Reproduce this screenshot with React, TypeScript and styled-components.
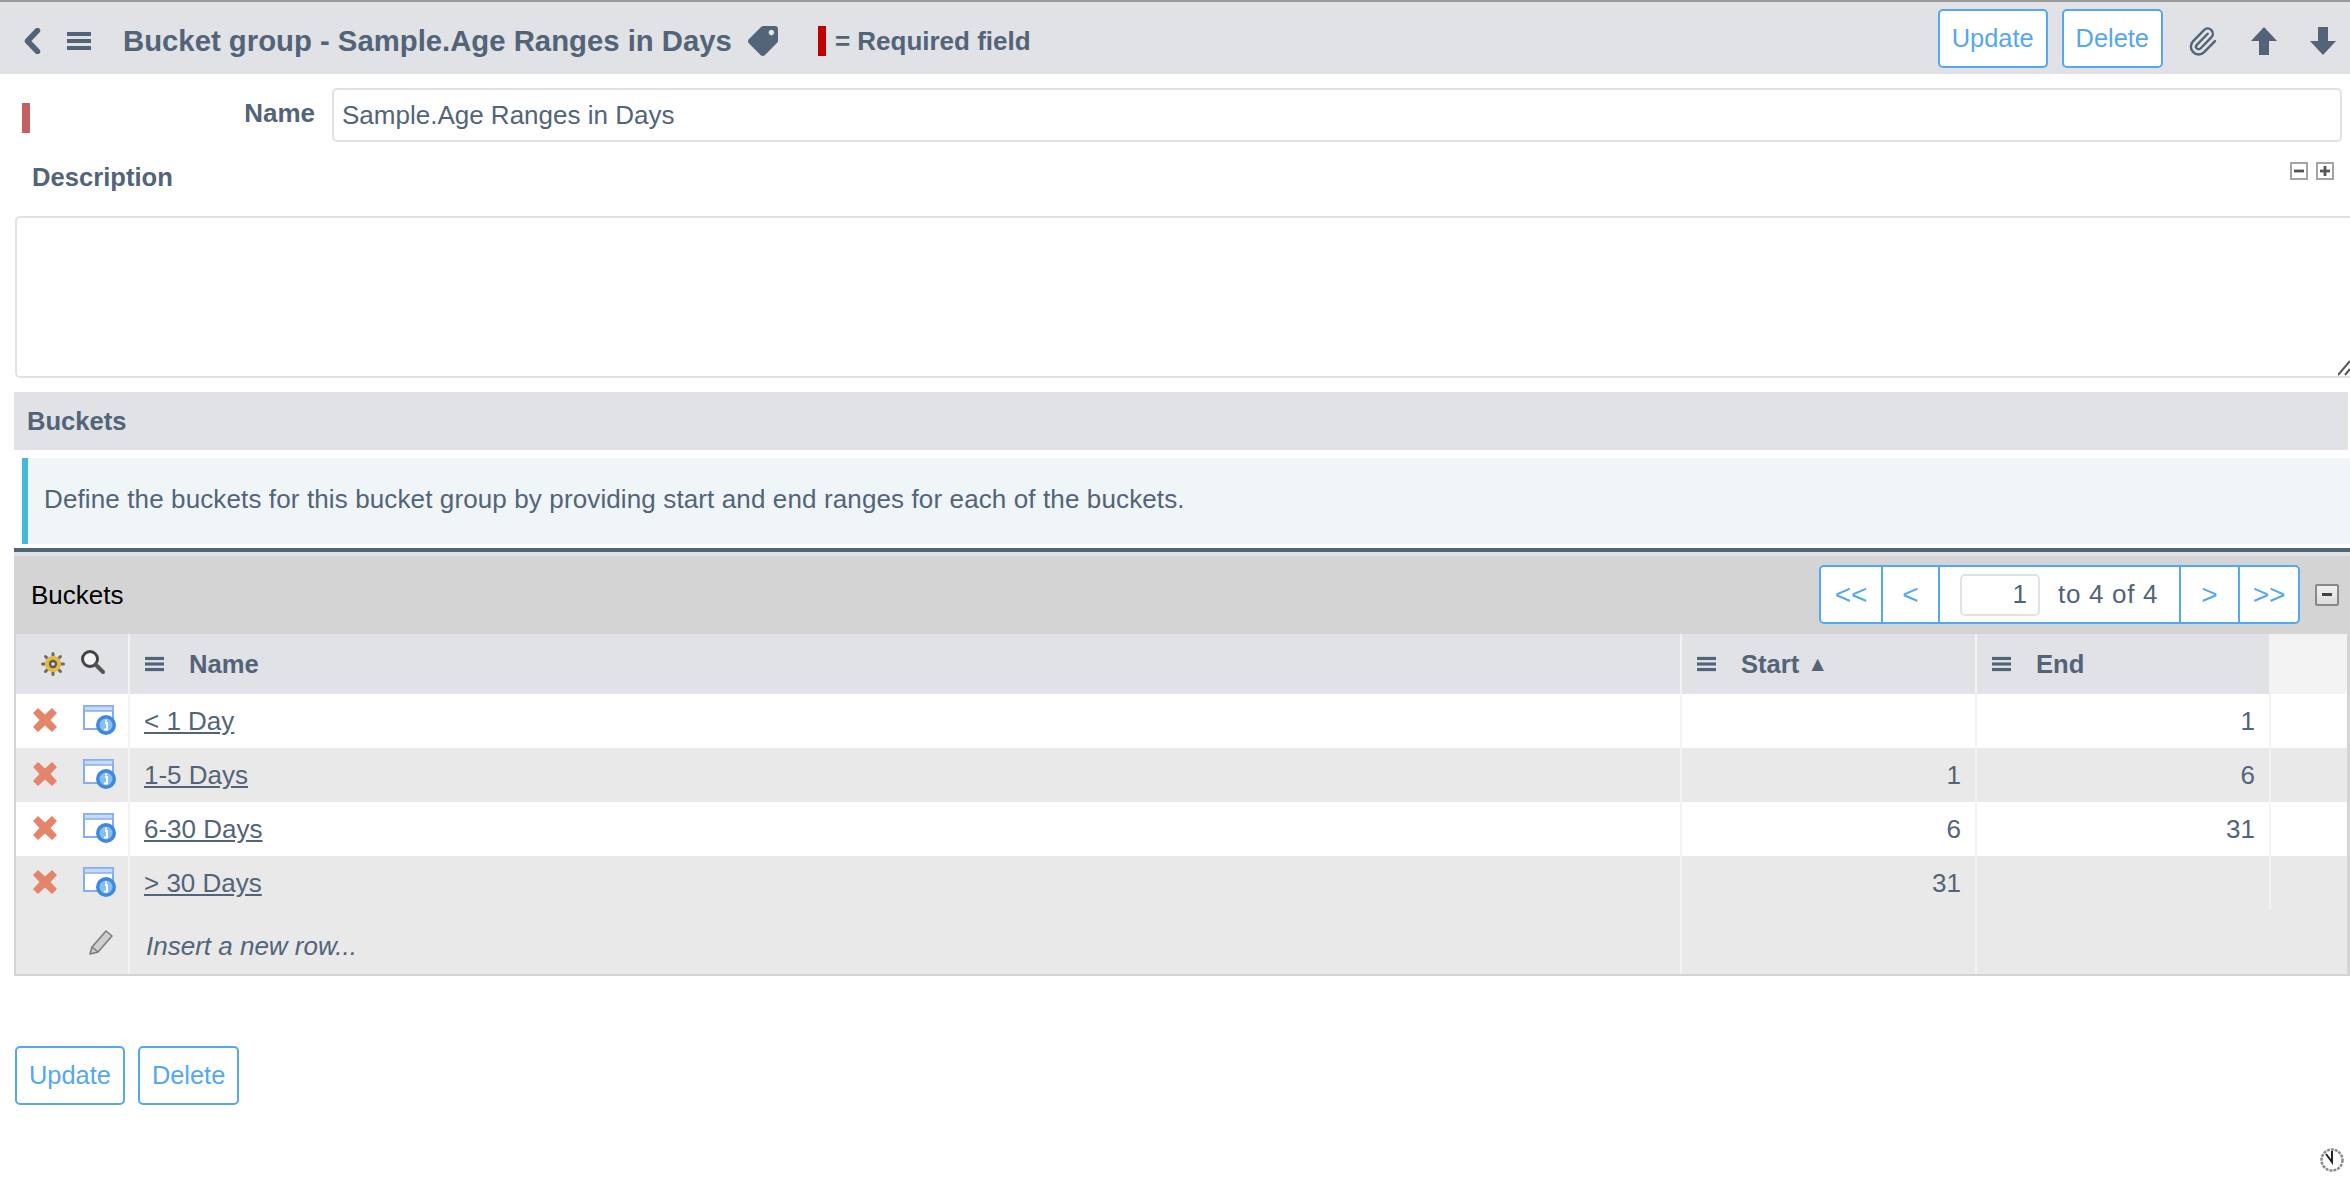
import React from 'react';
import styled, { createGlobalStyle } from 'styled-components';
import { Paperclip } from 'lucide-react';
import { FaTag } from 'react-icons/fa';

const TEXT = '#536478';
const BLUE = '#55a7ee';
const BAR = '#e0e2e6';

const GlobalStyle = createGlobalStyle`
    html, body {
        margin: 0;
        padding: 0;
        background: #fff;
        overflow: hidden;
    }
    body, input, textarea, button, table {
        font-family: "Liberation Sans", Arial, sans-serif;
        font-size: 26px;
        color: ${TEXT};
    }
`;

const Page = styled.div`
    width: 2350px;
    height: 1200px;
    display: flex;
    flex-direction: column;
    overflow: hidden;
`;

const Header = styled.div`
    height: 66px;
    border-top: 2px solid #999;
    background: ${BAR};
    display: flex;
    align-items: center;
    padding: 6px 0 0 23px;
`;

const Title = styled.h1`
    margin: 0 0 0 32px;
    font-size: 29.3px;
    font-weight: bold;
    white-space: nowrap;
`;

const RequiredMark = styled.span`
    width: 8px;
    height: 30px;
    background: #c00000;
    margin-left: 40px;
`;

const RequiredText = styled.span`
    margin-left: 9px;
    font-weight: bold;
`;

const Actions = styled.div`
    margin: -6px 0 0 auto;
    display: flex;
    align-items: center;
    gap: 14px;
    padding-right: 14px;
`;

const ActionButton = styled.button`
    height: 59px;
    padding: 0 12px;
    background: #fff;
    border: 2px solid ${BLUE};
    border-radius: 5px;
    color: ${BLUE};
    font-size: 25.4px;
`;

const ActionIcons = styled.div`
    display: flex;
    align-items: center;
    gap: 33px;
    margin-left: 10px;
`;

const NameRow = styled.div`
    display: flex;
    align-items: center;
    margin-top: 14px;
    height: 54px;
    padding: 0 8px 0 22px;
`;

const RequiredFlag = styled.span`
    width: 8px;
    height: 30px;
    margin-top: 5px;
    background: #c66060;
`;

const NameLabel = styled.label`
    width: 302px;
    padding-right: 17px;
    box-sizing: border-box;
    text-align: right;
    font-weight: bold;
    margin-top: -4px;
`;

const NameInput = styled.input`
    flex: 1;
    height: 100%;
    box-sizing: border-box;
    border: 2px solid ${BAR};
    border-radius: 5px;
    padding: 0 8px;
    outline: none;
`;

const DescriptionRow = styled.div`
    height: 74px;
    display: flex;
    justify-content: space-between;
    padding: 20px 16px 0 32px;
    box-sizing: border-box;
`;

const BoldLabel = styled.span`
    font-size: 25.6px;
    font-weight: bold;
    line-height: 30px;
`;

const ExpandGroup = styled.div`
    display: flex;
    gap: 8px;
`;

const ExpandBox = styled.span<{ $plus?: boolean }>`
    width: 18px;
    height: 18px;
    box-sizing: border-box;
    border: 2px solid #a4a4a4;
    background: #fff;
    position: relative;
    &::before {
        content: '';
        position: absolute;
        left: 2px;
        right: 2px;
        top: 5px;
        height: 4px;
        background: #555;
        transform: scaleY(0.7);
    }
    &::after {
        content: '';
        display: ${(p) => (p.$plus ? 'block' : 'none')};
        position: absolute;
        top: 2px;
        bottom: 2px;
        left: 5px;
        width: 4px;
        background: #555;
        transform: scaleX(0.7);
    }
`;

const AreaWrap = styled.div`
    position: relative;
    height: 162px;
    margin-left: 15px;
`;

const DescriptionArea = styled.textarea`
    display: block;
    width: 2350px;
    height: 162px;
    box-sizing: border-box;
    border: 2px solid ${BAR};
    border-radius: 5px;
    outline: none;
    resize: none;
`;

const Grip = styled.svg`
    position: absolute;
    right: 0;
    bottom: 2px;
`;

const SectionBar = styled.div`
    margin: 14px 2px 0 14px;
    height: 58px;
    background: ${BAR};
    display: flex;
    align-items: center;
    padding-left: 13px;
`;

const InfoBox = styled.div`
    margin: 8px 0 0 22px;
    height: 86px;
    box-sizing: border-box;
    border-left: 6px solid #46b8da;
    background: #f0f5f8;
    display: flex;
    align-items: center;
    padding: 0 0 3px 16px;
    letter-spacing: 0.12px;
`;

const Grid = styled.div`
    margin: 4px 0 0 14px;
    border-top: 4px solid ${TEXT};
`;

const GridTop = styled.div`
    height: 78px;
    border-top: 4px solid ${BAR};
    background: #d4d4d4;
    display: flex;
    align-items: center;
    justify-content: space-between;
    padding: 0 11px 0 17px;
    color: #000;
`;

const PagerWrap = styled.div`
    display: flex;
    align-items: center;
    gap: 16px;
    margin-top: -1px;
`;

const Pager = styled.div`
    display: flex;
    height: 59px;
    box-sizing: border-box;
    border: 2px solid ${BLUE};
    border-radius: 5px;
    background: #fff;
`;

const PagerButton = styled.span<{ $w: number }>`
    width: ${(p) => p.$w}px;
    display: flex;
    align-items: center;
    justify-content: center;
    color: ${BLUE};
    font-size: 28px;
    & + & {
        border-left: 2px solid ${BLUE};
    }
`;

const PagerCenter = styled.div`
    width: 243px;
    display: flex;
    align-items: center;
    border-left: 2px solid ${BLUE};
    border-right: 2px solid ${BLUE};
    box-sizing: border-box;
    padding-left: 20px;
    gap: 18px;
    color: ${TEXT};
    letter-spacing: 0.7px;
`;

const PageInput = styled.input`
    width: 80px;
    height: 42px;
    box-sizing: border-box;
    border: 2px solid ${BAR};
    border-radius: 5px;
    text-align: right;
    padding: 0 11px;
    outline: none;
`;

const CollapseBox = styled.span`
    width: 24px;
    height: 22px;
    box-sizing: border-box;
    border: 2px solid #888;
    border-radius: 2px;
    background: linear-gradient(#f2f2f2, #dcdcdc);
    position: relative;
    margin-left: -1px;
    &::after {
        content: '';
        position: absolute;
        left: 5px;
        right: 5px;
        top: 7px;
        height: 3px;
        background: #444;
    }
`;

const Table = styled.table`
    width: 2336px;
    table-layout: fixed;
    border-collapse: separate;
    border-spacing: 0;
    border-left: 2px solid #d4d4d4;
    border-right: 3px solid #d4d4d4;
    border-bottom: 2px solid #d4d4d4;
    box-sizing: border-box;
`;

const Th = styled.th<{ $empty?: boolean }>`
    height: 60px;
    padding: 0;
    background: ${(p) => (p.$empty ? '#f3f3f3' : BAR)};
    border-right: ${(p) => (p.$empty ? '0' : '2px solid #f3f3f3')};
    text-align: left;
    font-size: 25.6px;
    font-weight: bold;
`;

const HeadCell = styled.div`
    display: flex;
    align-items: center;
    padding-left: 15px;
    gap: 25px;
`;

const HeadIcons = styled.div`
    display: flex;
    align-items: center;
    gap: 15px;
    padding-left: 25px;
`;

const SortMark = styled.span`
    font-size: 21px;
    margin-left: -17px;
`;

const Row = styled.tr<{ $alt?: boolean }>`
    background: ${(p) => (p.$alt ? '#e9e9e9' : '#fff')};
`;

const Td = styled.td<{ $num?: boolean; $last?: boolean }>`
    height: 54px;
    padding: ${(p) => (p.$num ? '0 14px 0 0' : '0 0 0 14px')};
    text-align: ${(p) => (p.$num ? 'right' : 'left')};
    border-right: ${(p) => (p.$last ? '0' : '2px solid #f3f3f3')};
`;

const IconCell = styled.div`
    display: flex;
    align-items: center;
    gap: 25px;
    padding-left: 2px;
`;

const BucketLink = styled.a`
    color: ${TEXT};
    text-decoration: underline;
`;

const InsertCell = styled.td<{ $last?: boolean }>`
    height: 64px;
    box-sizing: border-box;
    padding: 9px 0 0 16px;
    font-style: italic;
    border-right: ${(p) => (p.$last ? '0' : '2px solid #f3f3f3')};
`;

const PencilCell = styled.div`
    display: flex;
    justify-content: flex-end;
    padding: 0 15px 9px 0;
`;

const BottomActions = styled.div`
    display: flex;
    gap: 13px;
    margin: 70px 0 0 15px;
`;

const Clock = styled.div`
    position: absolute;
    left: 2320px;
    top: 1148px;
    line-height: 0;
`;

const Chevron = () => (
    <svg width="18" height="26" viewBox="0 0 18 26" style={{ flex: 'none' }}>
        <path d="M14.5 2.5L4.5 13l10 10.5" fill="none" stroke={TEXT} strokeWidth="5.5" strokeLinecap="round" strokeLinejoin="round" />
    </svg>
);

const Bars = ({ w = 24, h = 20 }: { w?: number; h?: number }) => (
    <svg width={w} height={h} viewBox="0 0 24 20" fill={TEXT} style={{ flex: 'none' }}>
        <rect y="1" width="24" height="4" />
        <rect y="8" width="24" height="4" />
        <rect y="15" width="24" height="4" />
    </svg>
);

const Arrow = ({ down }: { down?: boolean }) => (
    <svg width="26" height="30" viewBox="0 0 26 30" fill={TEXT} style={{ marginTop: 6 }}>
        <path d={down ? 'M8 1h10v14h8L13 29 0 15h8z' : 'M13 1l13 14h-8v14H8V15H0z'} />
    </svg>
);

const Gear = () => (
    <svg width="24" height="24" viewBox="0 0 24 24">
        <g stroke="#6e6a5c" strokeWidth="3" strokeLinecap="round">
            <path d="M12 1.5v21M1.5 12h21M4.5 4.5l15 15M19.5 4.5l-15 15" />
        </g>
        <circle cx="12" cy="12" r="8" fill="#e5bb45" />
        <circle cx="12" cy="12" r="4.2" fill="#5d5a55" />
        <circle cx="12" cy="12" r="1.8" fill="#dfe1e5" />
    </svg>
);

const Search = () => (
    <svg width="26" height="26" viewBox="0 0 26 26" fill="none" style={{ marginTop: -4 }}>
        <circle cx="10" cy="10" r="7.5" stroke="#444" strokeWidth="3" fill="#f4f4f4" />
        <path d="M15.5 15.5L23 23" stroke="#555" strokeWidth="4" strokeLinecap="round" />
    </svg>
);

const Cross = () => (
    <svg width="26" height="26" viewBox="0 0 26 26" style={{ flex: 'none', marginLeft: 14, marginTop: -3 }}>
        <path d="M6 1l7 6.5L20 1l5 5-6.5 7 6.5 7-5 5-7-6.5L6 25l-5-5 6.5-7L1 6z" fill="#e4856b" />
    </svg>
);

const InfoWindow = () => (
    <svg width="33" height="30" viewBox="0 0 33 30" style={{ flex: 'none', marginTop: -3 }}>
        <rect x="1" y="1" width="29" height="23" fill="#fff" stroke="#86aeee" strokeWidth="2" />
        <rect x="1" y="1" width="29" height="5" fill="#c6d9f5" stroke="#86aeee" strokeWidth="1.5" />
        <circle cx="23" cy="20" r="10" fill="#3f88e0" />
        <circle cx="23" cy="20" r="6.5" fill="#86bff0" />
        <path d="M23 14.5v2M22 18h2v6.5h-3" fill="none" stroke="#fff" strokeWidth="2" />
    </svg>
);

const Pencil = () => (
    <svg width="24" height="26" viewBox="0 0 24 26">
        <path d="M1 25l2-7L17 2l6 5L9 23z" fill="#cfcfcf" stroke="#7d7d7d" strokeWidth="1.6" strokeLinejoin="round" />
        <path d="M3 18l6 5" stroke="#7d7d7d" strokeWidth="1.6" />
    </svg>
);

const ClockIcon = () => (
    <svg width="24" height="24" viewBox="0 0 24 24" fill="none">
        <circle cx="12" cy="12" r="10.5" fill="#fff" stroke="#8b8b8b" strokeWidth="2.5" strokeDasharray="3 1" />
        <path d="M6 6l6 8V3" stroke="#222" strokeWidth="2" />
    </svg>
);

const buckets = [
    { name: '< 1 Day', start: '', end: '1' },
    { name: '1-5 Days', start: '1', end: '6' },
    { name: '6-30 Days', start: '6', end: '31' },
    { name: '> 30 Days', start: '31', end: '' },
];

function App() {
    return (
        <Page>
            <GlobalStyle />
            <Header>
                <Chevron />
                <span style={{ width: 26 }} />
                <Bars />
                <Title>Bucket group - Sample.Age Ranges in Days</Title>
                <FaTag size={30} color={TEXT} style={{ marginLeft: 16, transform: 'rotate(90deg)' }} />
                <RequiredMark />
                <RequiredText>= Required field</RequiredText>
                <Actions>
                    <ActionButton>Update</ActionButton>
                    <ActionButton>Delete</ActionButton>
                    <ActionIcons>
                        <Paperclip size={31} color={TEXT} strokeWidth={1.9} style={{ marginTop: 6 }} />
                        <Arrow />
                        <Arrow down />
                    </ActionIcons>
                </Actions>
            </Header>

            <NameRow>
                <RequiredFlag />
                <NameLabel>Name</NameLabel>
                <NameInput readOnly value="Sample.Age Ranges in Days" />
            </NameRow>

            <DescriptionRow>
                <BoldLabel>Description</BoldLabel>
                <ExpandGroup>
                    <ExpandBox />
                    <ExpandBox $plus />
                </ExpandGroup>
            </DescriptionRow>
            <AreaWrap>
                <DescriptionArea readOnly />
                <Grip width="12" height="16" viewBox="0 0 12 16" fill="none" stroke="#555" strokeWidth="2">
                    <path d="M0 15L12 1M7 15l5-6" />
                </Grip>
            </AreaWrap>

            <SectionBar>
                <BoldLabel>Buckets</BoldLabel>
            </SectionBar>
            <InfoBox>Define the buckets for this bucket group by providing start and end ranges for each of the buckets.</InfoBox>

            <Grid>
                <GridTop>
                    <span>Buckets</span>
                    <PagerWrap>
                        <Pager>
                            <PagerButton $w={60}>&lt;&lt;</PagerButton>
                            <PagerButton $w={55}>&lt;</PagerButton>
                            <PagerCenter>
                                <PageInput readOnly value="1" />
                                to 4 of 4
                            </PagerCenter>
                            <PagerButton $w={57}>&gt;</PagerButton>
                            <PagerButton $w={58}>&gt;&gt;</PagerButton>
                        </Pager>
                        <CollapseBox />
                    </PagerWrap>
                </GridTop>
                <Table>
                    <colgroup>
                        <col style={{ width: 114 }} />
                        <col style={{ width: 1552 }} />
                        <col style={{ width: 295 }} />
                        <col style={{ width: 294 }} />
                        <col />
                    </colgroup>
                    <thead>
                        <tr>
                            <Th>
                                <HeadIcons>
                                    <Gear />
                                    <Search />
                                </HeadIcons>
                            </Th>
                            <Th>
                                <HeadCell>
                                    <Bars w={19} h={18} />
                                    Name
                                </HeadCell>
                            </Th>
                            <Th>
                                <HeadCell>
                                    <Bars w={19} h={18} />
                                    Start
                                    <SortMark>▲</SortMark>
                                </HeadCell>
                            </Th>
                            <Th>
                                <HeadCell>
                                    <Bars w={19} h={18} />
                                    End
                                </HeadCell>
                            </Th>
                            <Th $empty />
                        </tr>
                    </thead>
                    <tbody>
                        {buckets.map((b, i) => (
                            <Row key={b.name} $alt={i % 2 === 1}>
                                <Td style={{ padding: 0 }}>
                                    <IconCell>
                                        <Cross />
                                        <InfoWindow />
                                    </IconCell>
                                </Td>
                                <Td>
                                    <BucketLink href="#">{b.name}</BucketLink>
                                </Td>
                                <Td $num>{b.start}</Td>
                                <Td $num>{b.end}</Td>
                                <Td $last />
                            </Row>
                        ))}
                        <Row $alt>
                            <InsertCell style={{ paddingLeft: 0 }}>
                                <PencilCell>
                                    <Pencil />
                                </PencilCell>
                            </InsertCell>
                            <InsertCell>Insert a new row...</InsertCell>
                            <InsertCell />
                            <InsertCell $last />
                            <InsertCell $last />
                        </Row>
                    </tbody>
                </Table>
            </Grid>

            <BottomActions>
                <ActionButton>Update</ActionButton>
                <ActionButton>Delete</ActionButton>
            </BottomActions>
            <Clock>
                <ClockIcon />
            </Clock>
        </Page>
    );
}

export default App;
